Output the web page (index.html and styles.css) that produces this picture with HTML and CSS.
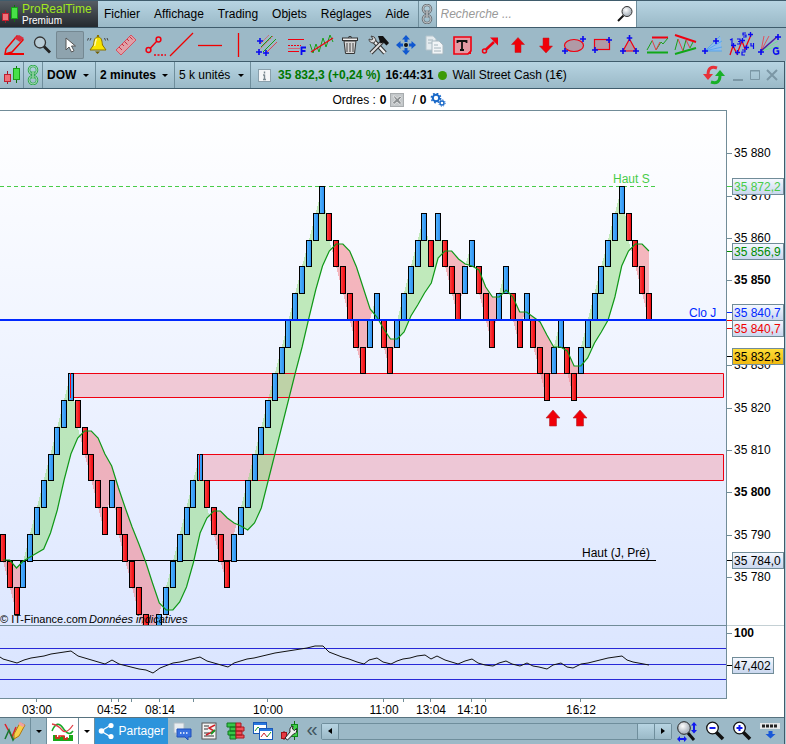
FILE: index.html
```html
<!DOCTYPE html>
<html lang="fr">
<head>
  <meta charset="UTF-8">
  <meta name="viewport" content="width=device-width, initial-scale=1.0">
  <title>ProRealTime Premium - DOW</title>
  <link rel="stylesheet" href="styles.css">
</head>
<body>
  <!-- Shared shapes -->
  <svg class="defs" width="0" height="0" aria-hidden="true">
    <defs>
      <symbol id="plus" viewBox="0 0 6 6"><path d="M3 0v6M0 3h6" stroke="#0a0af0" stroke-width="1.6"/></symbol>
      <symbol id="candles" viewBox="0 0 20 20">
        <path d="M5.500 6v13" stroke="#a01828"/><rect x="2.500" y="9.500" width="6" height="7" fill="#f07078" stroke="#c02030"/>
        <path d="M14.500 1v17" stroke="#107010"/><rect x="11.500" y="3.500" width="6" height="11" fill="#48e048" stroke="#18a018"/>
      </symbol>
      <symbol id="chain" viewBox="0 0 12 20">
        <rect x="2" y="1" width="8" height="8" rx="4" fill="none" stroke="currentColor" stroke-width="2.600"/>
        <rect x="2" y="11" width="8" height="8" rx="4" fill="none" stroke="currentColor" stroke-width="2.600"/>
        <rect x="2" y="1" width="8" height="8" rx="4" fill="none" stroke="#fff" stroke-opacity=".6" stroke-width=".9"/>
        <rect x="2" y="11" width="8" height="8" rx="4" fill="none" stroke="#fff" stroke-opacity=".6" stroke-width=".9"/>
        <path d="M6 6v8" stroke="currentColor" stroke-width="3"/><path d="M6 6v8" stroke="#fff" stroke-opacity=".8"/>
      </symbol>
      <linearGradient id="up" x1="0" x2="1"><stop offset="0" stop-color="#55b8ff"/><stop offset="1" stop-color="#2a8cf0"/></linearGradient>
      <linearGradient id="down" x1="0" x2="1"><stop offset="0" stop-color="#ff4a4a"/><stop offset="1" stop-color="#ee0008"/></linearGradient>
      <linearGradient id="tag" x1="0" x2="0" y1="0" y2="1"><stop offset="0" stop-color="#f6f9ff"/><stop offset="1" stop-color="#c8d6ee"/></linearGradient>
      <linearGradient id="gold" x1="0" x2="0" y1="0" y2="1"><stop offset="0" stop-color="#ffdf38"/><stop offset="1" stop-color="#f0b810"/></linearGradient>
      <radialGradient id="glass" cx=".4" cy=".35"><stop offset="0" stop-color="#fff"/><stop offset="1" stop-color="#b4bcc4"/></radialGradient>
    </defs>
  </svg>

  <!-- Menu bar -->
  <header class="menubar">
    <div class="logo">
      <svg width="20" height="20"><use href="#candles"/></svg>
      <div class="logo-text">
        <span class="logo-name">ProRealTime</span>
        <span class="logo-plan">Premium</span>
      </div>
    </div>
    <nav class="menu">
      <a href="#">Fichier</a>
      <a href="#">Affichage</a>
      <a href="#">Trading</a>
      <a href="#">Objets</a>
      <a href="#">Réglages</a>
      <a href="#">Aide</a>
    </nav>
    <button class="link-btn" aria-label="Lier"><svg width="12" height="20"><use href="#chain"/></svg></button>
    <div class="search">
      <input type="text" placeholder="Recherche ..." aria-label="Recherche">
      <svg width="18" height="18" viewBox="0 0 18 18"><circle cx="11" cy="6.500" r="5" fill="url(#glass)" stroke="#333"/><path d="M7.500 10.500L2 16" stroke="#111" stroke-width="2"/></svg>
    </div>
  </header>

  <!-- Drawing tools -->
  <div class="toolbar">
    <button aria-label="Dessin"><svg viewBox="0 0 28 28"><path d="M6 18L17 5l6 4-11 12-7 2z" fill="none" stroke="#f00000" stroke-width="1.500"/><path d="M19 4l5 3-4 4-6-4z" fill="#d83040"/><path d="M5 23h19" stroke="#f00000" stroke-width="2"/></svg></button>
    <button aria-label="Zoom"><svg viewBox="0 0 28 28"><circle cx="12" cy="11.500" r="5.500" fill="#b8ccd6" stroke="#333" stroke-width="1.300"/><path d="M16 15.500l6 6" stroke="#222" stroke-width="2.800"/></svg></button>
    <button class="active" aria-label="Sélection"><svg viewBox="0 0 28 28"><path d="M10 7v12l3-3 2.500 5 2.500-1.200-2.500-4.800h4z" fill="#fff" stroke="#555"/></svg></button>
    <button aria-label="Alerte"><svg viewBox="0 0 28 28"><path d="M14 6c-4 0-4 5-4.500 8L6 19h16l-3.500-5C18 11 18 6 14 6z" fill="#f8e400" stroke="#8a7200"/><path d="M11 20.500h5l-2.500 2.500z" fill="#705c00"/><path d="M12.500 8c-1.500 2-1 5-2 7" stroke="#fffbb0" stroke-width="1.500" fill="none"/><path d="M13 5h2" stroke="#8a7200" stroke-width="2"/><path d="M7 7l-1 2.500M4.500 7l-1 2.500M20.500 7l1 2.500M23 7l1 2.500" stroke="#444"/></svg></button>
    <button aria-label="Règle"><svg viewBox="0 0 28 28"><path d="M4 19L19 4l5 5L9 24z" fill="#e0a0a8" stroke="#d85060"/><path d="M7 16l3 3M10 13l2 2M12.500 10.500l3 3M15 8l2 2M17.500 5.500l3 3" stroke="#c83040"/></svg></button>
    <button aria-label="Segment"><svg viewBox="0 0 28 28" fill="none" stroke="#f00010" stroke-width="1.500"><circle cx="8.500" cy="19" r="2.400"/><circle cx="18.500" cy="8.500" r="2.400"/><path d="M10 17.500l7-7.500"/><path d="M14 24h12" stroke-dasharray="2 1.500"/></svg></button>
    <button aria-label="Droite"><svg viewBox="0 0 28 28"><path d="M2 25L25 2" stroke="#f00000" stroke-width="1.300"/></svg></button>
    <button aria-label="Horizontale"><svg viewBox="0 0 28 28"><path d="M2 14.500h24" stroke="#f00000" stroke-width="1.300"/></svg></button>
    <button aria-label="Verticale"><svg viewBox="0 0 28 28"><path d="M14.500 2v24" stroke="#f00000" stroke-width="1.300"/></svg></button>
    <button aria-label="Canal"><svg viewBox="0 0 28 28"><path d="M7 19L21 5M9 12L17 4" stroke="#e05060" stroke-dasharray="2 1"/><path d="M9 16L20 5M11 21l13-13" stroke="#18a018"/><path d="M14 22L25 11" stroke="#e04050"/><use href="#plus" x="5" y="7" width="6" height="6"/><use href="#plus" x="4" y="18" width="6" height="6"/><use href="#plus" x="11" y="19" width="6" height="6"/></svg></button>
    <button aria-label="Fibonacci"><svg viewBox="0 0 28 28"><path d="M8 8.500h16M8 20.500h11" stroke="#f00010"/><path d="M8 14.500h13" stroke="#f00010" stroke-dasharray="2 1"/><path d="M8 17.500h12" stroke="#e05060" stroke-width=".8"/><path d="M21.500 24v-7.500h4.500M21.500 20h4" fill="none" stroke="#0a0af0" stroke-width="1.800"/></svg></button>
    <button aria-label="Régression"><svg viewBox="0 0 28 28" fill="none"><path d="M2 13l3 9 3-9 3 8 4-14 3 9 4-12 3 7" stroke="#18a018"/><path d="M3 21L25 7" stroke="#f00010" stroke-width="1.300"/></svg></button>
    <button aria-label="Supprimer"><svg viewBox="0 0 28 28"><path d="M8 10h12l-1.500 12.500h-9z" fill="#d8d8d8" stroke="#333"/><path d="M11 12v9M14 12v9M17 12v9" stroke="#444"/><rect x="6.500" y="7" width="15" height="2.500" fill="#eee" stroke="#333"/><path d="M12 6.500q2-2.500 4 0" fill="none" stroke="#333"/></svg></button>
    <button aria-label="Outils"><svg viewBox="0 0 28 28"><path d="M8 8l13 14" stroke="#333" stroke-width="4.500"/><path d="M8 8l13 14" stroke="#eee" stroke-width="2.500"/><path d="M5 8q0 4 5 4l2-3q-1-4-5-4l2 3-2 1z" fill="#ddd" stroke="#444"/><path d="M7 22L19 10" stroke="#333" stroke-width="4"/><path d="M7 22L19 10" stroke="#ddd" stroke-width="2"/><path d="M14 5l5 0 6 7-2.500 2.500-3-3-3 1z" fill="#111"/></svg></button>
    <button aria-label="Déplacer"><svg viewBox="0 0 28 28"><path d="M14 4l4 4.500h-2.500V11h-3V8.500H10zM14 24l4-4.500h-2.500V17h-3v2.500H10zM4 14l4.500-4v2.500H11v3H8.500V18zM24 14l-4.500-4v2.500H17v3h2.500V18z" fill="#1058d0"/><circle cx="14" cy="14" r="2" fill="#111"/></svg></button>
    <button aria-label="Copier"><svg viewBox="0 0 28 28"><path d="M6 5h7l3 3v11H6z" fill="#e4ebef" stroke="#b4c4cc"/><path d="M8 9h5M8 12h5" stroke="#a4b4bc"/><path d="M12 10h7l4 4v9H12z" fill="#f2f5f7" stroke="#a8b8c0"/><path d="M14 14h4M14 17h7M14 20h7" stroke="#a4b4bc"/></svg></button>
    <button aria-label="Texte"><svg viewBox="0 0 28 28"><path d="M6 6h17v14l-3 3H6z" fill="#e49aa4" stroke="#f00010" stroke-width="1.600"/><path d="M9.500 12V10h9v2M14 10v9M12 19h4" fill="none" stroke="#111" stroke-width="1.800"/><path d="M23 19l-4 4h4z" fill="#f00010"/></svg></button>
    <button aria-label="Flèche"><svg viewBox="0 0 28 28"><circle cx="8.500" cy="20" r="2" fill="none" stroke="#f00010" stroke-width="1.500"/><path d="M10 18.500L18 11" stroke="#f00010" stroke-width="2.500"/><path d="M14 6.500h8v8z" fill="#f00010"/></svg></button>
    <button aria-label="Flèche haut"><svg viewBox="0 0 28 28"><path d="M14 6.500l6.500 7h-3.500v8h-6v-8H7.500z" fill="#f00008" stroke="#c01820" stroke-width=".5"/></svg></button>
    <button aria-label="Flèche bas"><svg viewBox="0 0 28 28"><path d="M14 22l6.500-7h-3.500V7h-6v8H7.500z" fill="#f00008" stroke="#c01820" stroke-width=".5"/></svg></button>
    <button aria-label="Ellipse"><svg viewBox="0 0 28 28"><ellipse cx="14" cy="14.500" rx="9.500" ry="6" fill="#b09aa6" stroke="#f00010" stroke-width="1.200"/><use href="#plus" x="20" y="5" width="6" height="6"/><use href="#plus" x="2" y="17" width="6" height="6"/></svg></button>
    <button aria-label="Rectangle"><svg viewBox="0 0 28 28"><rect x="6.500" y="8.500" width="15" height="10" fill="#b09aa6" stroke="#f00010" stroke-width="1.200"/><use href="#plus" x="18" y="6" width="6" height="6"/><use href="#plus" x="4" y="16" width="6" height="6"/></svg></button>
    <button aria-label="Triangle"><svg viewBox="0 0 28 28"><path d="M13.500 8l6.500 12H7z" fill="#b09aa6" stroke="#f00010" stroke-width="1.200"/><use href="#plus" x="10.500" y="4" width="6" height="6"/><use href="#plus" x="4" y="17" width="6" height="6"/><use href="#plus" x="17" y="17" width="6" height="6"/></svg></button>
    <button aria-label="Range"><svg viewBox="0 0 28 28" fill="none"><path d="M8 6.500h16" stroke="#f00010" stroke-width="2"/><path d="M3 21.500h21" stroke="#10a818" stroke-width="2"/><path d="M3 19l5-9M12 19l5-8 2 2 5-6" stroke="#18a018"/><path d="M8 9l4 10 4-8" stroke="#e04048"/></svg></button>
    <button aria-label="Biseau"><svg viewBox="0 0 28 28" fill="none"><path d="M3 4l21 7" stroke="#f00010" stroke-width="2"/><path d="M3 23l21-6" stroke="#10a818" stroke-width="2"/><path d="M3 19l3-11M11 20l3-11M18 17l3-6" stroke="#18a018"/><path d="M6 8l5 12M14 9l4 8" stroke="#e04048"/></svg></button>
    <button aria-label="Éventail"><svg viewBox="0 0 28 28"><path d="M5 20L21 6v14z" fill="#8cbcec"/><path d="M5 20L22 10M5 20l17-4M5 20h17M5 20L20 5" stroke="#4aa0f0" stroke-width=".8"/><use href="#plus" x="2" y="17" width="6" height="6"/><use href="#plus" x="13" y="7" width="6" height="6"/></svg></button>
    <button aria-label="Elliott"><svg viewBox="0 0 28 28" fill="none"><path d="M2 24l3-9 4 8 5-13 3 8 6-14" stroke="#f00010" stroke-width="1.300"/><path d="M2 9l2-1v6M9 8h3v5H9M10 10.500h2M18 2h-3v2h3v2h-3M14 19h3v2h-3v3h3M23 12v3h3M25.500 12v6" stroke="#0a0af0" stroke-width="1.200"/><use href="#plus" x="3" y="12" width="5" height="5"/><use href="#plus" x="7" y="19" width="5" height="5"/><use href="#plus" x="12" y="7" width="5" height="5"/><use href="#plus" x="16" y="14" width="5" height="5"/><use href="#plus" x="20" y="1" width="5" height="5"/></svg></button>
    <button aria-label="Gann"><svg viewBox="0 0 28 28" fill="none"><path d="M5 20L8 5M5 20L13 5" stroke="#e05060"/><path d="M5 20L22 10M5 20l18-5" stroke="#70e090"/><path d="M5 20L22 5" stroke="#5020a0" stroke-width="1.500"/><path d="M22.500 17.500q-5-2-5 2.500t5 2.500v-2.500h-2" stroke="#0a0af0" stroke-width="1.600"/><use href="#plus" x="2" y="18" width="6" height="6"/><use href="#plus" x="19" y="3" width="6" height="6"/></svg></button>
  </div>

  <div class="window">
    <!-- Chart title bar -->
    <div class="titlebar">
      <span class="cell type"><svg width="20" height="20"><use href="#candles"/></svg></span>
      <button class="cell green" aria-label="Lier la fenêtre"><svg width="12" height="20"><use href="#chain"/></svg></button>
      <div class="cell select bold symbol"><select aria-label="Valeur"><option>DOW</option></select></div>
      <div class="cell select bold timeframe"><select aria-label="Unité de temps"><option>2 minutes</option></select></div>
      <div class="cell select units"><select aria-label="Historique"><option>5 k unités</option></select></div>
      <button class="info" aria-label="Informations"><svg width="13" height="13" viewBox="0 0 13 13"><rect x=".5" y=".5" width="12" height="12" fill="#f4f6f8" stroke="#8aa0ac"/><path d="M6.500 2.500v2M6.500 5.500v5M5 6h1.500M5 10.500h3" stroke="#7a8890" stroke-width="1.400"/></svg></button>
      <span class="quote">35 832,3 (+0,24 %)</span>
      <time class="clock">16:44:31</time>
      <span class="dot"></span>
      <span class="market">Wall Street Cash (1€)</span>
      <div class="win-buttons">
        <button aria-label="Actualiser"><svg width="22" height="20" viewBox="0 0 22 20"><path d="M14 3Q5 0 5 10" fill="none" stroke="#e83038" stroke-width="3"/><path d="M0 9h10l-5 6z" fill="#e83038"/><path d="M8 17q9 3 9-7" fill="none" stroke="#18b028" stroke-width="3"/><path d="M12 11h10l-5-6z" fill="#18b028"/></svg></button>
        <button aria-label="Réduire"><svg width="12" height="14"><path d="M1 12h10" stroke="#7b97a5" stroke-width="2"/></svg></button>
        <button aria-label="Agrandir"><svg width="12" height="14"><path d="M1.500 2.500h9v9h-9zM1 3h10" fill="none" stroke="#7b97a5"/></svg></button>
        <button aria-label="Fermer"><svg width="12" height="14"><path d="M1 2l10 10M11 2L1 12" stroke="#7b97a5" stroke-width="2"/></svg></button>
      </div>
    </div>

    <!-- Orders -->
    <div class="orders">
      <span>Ordres :</span> <b>0</b>
      <svg width="14" height="14" viewBox="0 0 14 14"><rect x=".5" y=".5" width="13" height="13" fill="#c4c8ca" stroke="#a8acae"/><path d="M3 3l2 0 2 2.500 3-2.500 1.500 1.500-2.500 2.500 2.500 3-1.500 1.500-3-2.500-3 2.500-1.500-2 3-2.500z" fill="#8c9092" stroke="#f0f0f0" stroke-width=".7"/></svg>
      <span class="slash">/</span> <b>0</b>
      <svg width="16" height="14" viewBox="0 0 16 14" fill="none" stroke="#1868c8"><circle cx="6" cy="5" r="3.200" stroke-width="2"/><circle cx="6" cy="5" r="4.700" stroke-width="1.400" stroke-dasharray="1.800 1.890"/><circle cx="12" cy="10" r="2" stroke-width="1.400"/><circle cx="12" cy="10" r="3.200" stroke-dasharray="1.200 1.310"/></svg>
    </div>

    <!-- Chart -->
    <main class="chart">
      <div class="plots">
        <svg class="price" id="price"></svg>
        <svg class="indicator" id="indicator"></svg>
      </div>
      <svg class="axis" id="axis"></svg>
      <svg class="times" id="times"></svg>
    </main>

    <!-- Bottom bar -->
    <footer class="bottombar">
      <button class="tool-first" aria-label="Dessiner"><svg width="22" height="22" viewBox="0 0 22 22" fill="none"><path d="M1 4l7 13 4-10" stroke="#e02028" stroke-width="1.500"/><path d="M1 19l4-9 4 10 9-15" stroke="#187830" stroke-width="1.500"/><path d="M10 14l6-11 5 2-6 11-5 3z" fill="#f8d048" stroke="#b07810"/><path d="M15 3l5 3" stroke="#f0a0a0" stroke-width="3"/></svg></button>
      <button class="drop" aria-label="Plus d'outils"></button>
      <button class="tool-ind" aria-label="Indicateurs"><svg width="24" height="22" viewBox="0 0 24 22" fill="none"><path d="M1 11q5-12 11-3t10 3" stroke="#18a828" stroke-width="1.500"/><path d="M1 4q6 1 10 6t11-5" stroke="#e04048" stroke-width="1.300"/><path d="M2 15h4v2h4v-1h4v2h4v-3h4v6H2z" fill="#18a818"/><path d="M5 15v3h3v-2h5v3h3v-2" stroke="#e82020" stroke-width="1.500"/></svg></button>
      <button class="drop white" aria-label="Plus d'indicateurs"></button>
      <button class="share"><svg width="16" height="18" viewBox="0 0 16 18"><path d="M13 3L3 9l10 6" fill="none" stroke="#fff" stroke-width="1.300"/><circle cx="13" cy="3.500" r="2.600" fill="#fff"/><circle cx="3.500" cy="9" r="2.800" fill="#fff"/><circle cx="13" cy="14.500" r="2.600" fill="#fff"/></svg>Partager</button>
      <button class="tool" aria-label="Discussion"><svg width="20" height="20" viewBox="0 0 20 20"><path d="M2 2h10v10H8l-4 3v-3H2z" fill="#e8edf0" stroke="#b0bcc4"/><path d="M5 8h14v8h-3v3l-3-3H5z" fill="#3870e0" stroke="#2050b8"/><path d="M8 12h1.500M11 12h1.500M14 12h1.500" stroke="#fff" stroke-width="1.500"/></svg></button>
      <button class="tool" aria-label="Carnet"><svg width="20" height="20" viewBox="0 0 20 20"><rect x="3" y="2" width="14" height="16" fill="#f4f4f4" stroke="#555"/><path d="M5 5h5M5 8h4M5 12h5M5 15h10" stroke="#333"/><path d="M16 4l-6 3 5 3-8 4" fill="none" stroke="#d02028" stroke-width="1.500"/><path d="M12 13l4-4" stroke="#189828" stroke-width="2"/></svg></button>
      <button class="tool" aria-label="Profondeur"><svg width="20" height="20" viewBox="0 0 20 20"><path d="M1 2h9v4H1zM4 6h6v4H4zM2 10h8v4H2zM4 14h6v4H4z" fill="#38c848" stroke="#107820"/><path d="M10 2h5v4h-5zM10 6h8v4h-8zM10 10h6v4h-6zM10 14h8v3h-8z" fill="#f05058" stroke="#a81820"/></svg></button>
      <button class="tool" aria-label="Fenêtres"><svg width="20" height="20" viewBox="0 0 20 20"><rect x=".5" y="1.500" width="13" height="11" fill="#fff" stroke="#1858b8"/><path d="M1 3h12" stroke="#2878e0" stroke-width="2"/><path d="M2 10l3-4 3 3" fill="none" stroke="#189828"/><rect x="6.500" y="7.500" width="13" height="11" fill="#fff" stroke="#1858b8"/><path d="M7 9h12" stroke="#2878e0" stroke-width="2"/><path d="M8 16l3-4 3 4" fill="none" stroke="#d02028"/><path d="M14 16l4-5" stroke="#189828"/></svg></button>
      <button class="tool" aria-label="Réglages"><svg width="20" height="20" viewBox="0 0 20 20"><path d="M14.500 0v19" stroke="#107010"/><rect x="11.500" y="3.500" width="6" height="12" fill="#40d048" stroke="#108818"/><path d="M4 10v9" stroke="#801010"/><rect x="1.500" y="11.500" width="5" height="6" fill="#e83840" stroke="#a01018"/><path d="M5 17l5-6q-1-5 3-6l-.5 3 2 1.500 2-2q1 5-3 5.500l-6 6z" fill="#f0f0f0" stroke="#222"/></svg></button>
      <button class="collapse" aria-label="Replier">«</button>
      <div class="scroll">
        <button class="arrow left" aria-label="Gauche"></button>
        <div class="track"><span class="thumb"></span></div>
        <button class="arrow right" aria-label="Droite"></button>
      </div>
      <div class="zooms">
        <button aria-label="Ajuster"><svg width="22" height="22" viewBox="0 0 22 22"><path d="M12 13l6 7" stroke="#111" stroke-width="3"/><circle cx="8" cy="8" r="6.300" fill="url(#glass)" stroke="#222"/><path d="M18 2l3 3.500h-2V10h2l-3 3.500L15 10h2V5.500h-2zM1 19l3-3v2h4v-2l3 3-3 3v-2H4v2z" fill="#1018f0"/></svg></button>
        <button aria-label="Zoom arrière"><svg width="22" height="22" viewBox="0 0 22 22"><path d="M12 12l7 7" stroke="#111" stroke-width="3.500"/><circle cx="8.500" cy="8" r="5.800" fill="#fff" stroke="#111" stroke-width="1.300"/><path d="M5.500 8h6" stroke="#1018f0" stroke-width="2"/></svg></button>
        <button aria-label="Zoom avant"><svg width="22" height="22" viewBox="0 0 22 22"><path d="M12 12l7 7" stroke="#111" stroke-width="3.500"/><circle cx="8.500" cy="8" r="5.800" fill="#fff" stroke="#111" stroke-width="1.300"/><path d="M5.500 8h6M8.500 5v6" stroke="#1018f0" stroke-width="2"/></svg></button>
        <button aria-label="Clavier"><svg width="22" height="22" viewBox="0 0 22 22"><rect x="1" y="3" width="20" height="6" fill="#e4e8ea"/><path d="M3 6h16" stroke="#222" stroke-width="3" stroke-dasharray="3 1"/><path d="M9.500 11h4v3h3l-5 4.500-5-4.500h3z" fill="#1858d8"/></svg></button>
      </div>
    </footer>
  </div>

  <script src="script.js"></script>
</body>
</html>
```
FILE: styles.css
```css
/* General */
* {
  box-sizing: border-box;
}

body {
  margin: 0;
  background: #b4ced9;
  font-family: "Liberation Sans", Arial, sans-serif;
  font-size: 12px;
  color: #000;
  overflow: hidden;
}

button {
  display: flex;
  align-items: center;
  justify-content: center;
  padding: 0;
  border: 0;
  background: none;
  color: inherit;
  font: inherit;
}

svg {
  display: block;
}

.defs {
  position: absolute;
}

/* Menu bar */
.menubar {
  display: flex;
  height: 28px;
  border-top: 1px solid #3f5c6c;
  border-bottom: 1px solid #3f5c6c;
  background: linear-gradient(#b7d4e2, #9ab9c7);
}

.logo {
  display: flex;
  align-items: center;
  gap: 2px;
  width: 98px;
  background: linear-gradient(#565d64, #24292e);
}

.logo-text {
  display: flex;
  flex-direction: column;
}

.logo-name {
  color: #a0e820;
  line-height: 13px;
}

.logo-plan {
  color: #fff;
  font-size: 10px;
  line-height: 10px;
}

.menu {
  display: flex;
  align-items: center;
  gap: 14px;
  padding: 0 8px 0 6px;
}

.menu a {
  color: #000;
  text-decoration: none;
}

.link-btn {
  width: 19px;
  border-left: 1px solid #6f8e9c;
  border-right: 1px solid #6f8e9c;
  color: #6c747a;
}

.search {
  display: flex;
  align-items: center;
  width: 200px;
  padding: 0 2px 0 4px;
  background: #fff;
  border-right: 1px solid #6f8e9c;
}

.search input {
  flex: 1;
  min-width: 0;
  padding: 0;
  border: 0;
  outline: 0;
  font: inherit;
}

.search input::placeholder {
  color: #999;
  font-style: italic;
}

/* Drawing tools */
.toolbar {
  display: flex;
  align-items: center;
  height: 33px;
  background: #9cb9c7;
}

.toolbar button {
  width: 28px;
  height: 28px;
  border-radius: 2px;
}

.toolbar svg {
  width: 28px;
  height: 28px;
}

.toolbar .active {
  background: #8ea3ae;
  box-shadow: inset 0 0 0 1px #748892;
}

/* Chart window */
.window {
  margin-right: 1px;
  border-top: 1px solid #3f5c6c;
  border-right: 1px solid #3f5c6c;
  background: #fff;
}

.titlebar {
  display: flex;
  align-items: center;
  height: 27px;
  border-bottom: 1px solid #3f5c6c;
  background: linear-gradient(#b7d4e2, #9ab9c7);
}

.cell {
  display: flex;
  align-items: center;
  justify-content: center;
  align-self: stretch;
  border-right: 1px solid #6f8e9c;
}

.type {
  width: 24px;
}

.green {
  width: 19px;
  color: #30a850;
}

.select {
  position: relative;
}

.symbol {
  width: 53px;
}

.timeframe {
  width: 79px;
}

.units {
  width: 76px;
  margin-right: 7px;
}

.select select {
  appearance: none;
  width: 100%;
  height: 100%;
  padding: 0 0 0 4px;
  border: 0;
  background: none;
  font: inherit;
  color: inherit;
}

.bold,
.bold select {
  font-weight: bold;
}

/* small down arrow of the drop-downs */
.select::after,
.drop::after {
  content: '';
  border: 3px solid transparent;
  border-top-color: #000;
  border-bottom: 0;
}

.select::after {
  position: absolute;
  right: 6px;
  top: 12px;
  pointer-events: none;
}

.quote {
  margin-left: 7px;
  color: #007800;
  font-weight: bold;
}

.clock {
  margin-left: 5px;
  font-weight: bold;
}

.dot {
  width: 9px;
  height: 9px;
  margin: 0 5px;
  border-radius: 50%;
  background: #3c9a08;
}

.win-buttons {
  display: flex;
  align-items: center;
  gap: 5px;
  margin-left: auto;
  padding-right: 6px;
}

.win-buttons button:first-child {
  margin-right: 2px;
}

.orders {
  display: flex;
  align-items: center;
  justify-content: center;
  gap: 4px;
  height: 21px;
  padding-right: 6px;
}

.orders .slash {
  margin-left: 5px;
}

.orders b + svg {
  margin-left: -1px;
}

/* Chart */
.chart {
  display: grid;
  grid-template-columns: 1fr 57px;
}

.plots {
  min-width: 0;
  border: 1px solid #718c98;
  border-left: 0;
  background: linear-gradient(#ffffff, #d9e4ff);
}

.price {
  width: 100%;
  height: 515px;
  border-bottom: 1px solid #718c98;
}

.indicator {
  width: 100%;
  height: 72px;
}

.axis {
  width: 57px;
  height: 589px;
}

.times {
  grid-column: 1 / 3;
  width: 100%;
  height: 18px;
}

/* Bottom bar */
.bottombar {
  display: flex;
  align-items: stretch;
  height: 27px;
  border-top: 1px solid #57727f;
  background: #9cb9c7;
}

.tool-first {
  width: 31px;
  border-right: 1px solid #6f8e9c;
}

.drop {
  width: 16px;
  border-right: 1px solid #6f8e9c;
}

.tool-ind {
  width: 32px;
  border-right: 1px solid #6f8e9c;
  background: #fff;
}

.white {
  background: #fff;
}

.share {
  gap: 4px;
  width: 73px;
  background: #2c94dc;
  color: #fff;
}

.tool {
  width: 27px;
}

.collapse {
  width: 18px;
  padding-bottom: 4px;
  color: #3f5560;
  font-size: 20px;
}

.scroll {
  display: flex;
  flex: 1;
  align-self: center;
  height: 17px;
  border: 1px solid #6f8e9c;
  border-radius: 2px;
}

.arrow {
  width: 16px;
  background: linear-gradient(#b7d4e2, #9ab9c7);
}

.arrow::after {
  content: '';
  border: 3px solid transparent;
}

.left::after {
  border-right: 4px solid #000;
  border-left: 0;
}

.right::after {
  border-left: 4px solid #000;
  border-right: 0;
}

.track {
  display: flex;
  flex: 1;
  justify-content: flex-end;
  border-left: 1px solid #6f8e9c;
  border-right: 1px solid #6f8e9c;
}

.thumb {
  width: 17px;
  border-left: 1px solid #6f8e9c;
  background: linear-gradient(#b7d4e2, #9ab9c7);
}

.zooms {
  display: flex;
  width: 112px;
  padding-left: 1px;
}

.zooms button {
  flex: 1;
}

/* Chart texts */
.chart text {
  font-size: 12px;
}

.chart .strong {
  font-weight: bold;
}

.chart .note {
  font-size: 11px;
}

.chart .italic {
  font-style: italic;
}

.crisp {
  shape-rendering: crispEdges;
}
```
FILE: script.js
```js
const price = document.getElementById('price');
const indicator = document.getElementById('indicator');
const axis = document.getElementById('axis');
const times = document.getElementById('times');

// One letter per brick: U = up, D = down
const bricks = 'DDDUUUUUUUUDDDDDUDDDDDDUUUUUUUDDDDUUUUUUUUUUUUUUDDDDDDUUDDUUUUUDUDDDUUDDDUUDDUDDDUUDDUUUUUUUDDDD';

// Moving average, one value per brick
const average = [
  449, 449, 457, 450, 446, 442, 438, 422, 399, 369, 343, 327, 320, 320, 327, 343, 355, 377, 397, 416,
  433, 451, 472, 492, 499, 499, 491, 476, 452, 422, 407, 400, 400, 407, 412, 415, 419, 412, 397, 370,
  343, 316, 289, 262, 236, 207, 179, 155, 140, 133, 133, 140, 156, 177, 198, 206, 218, 228, 228, 221,
  205, 194, 182, 172, 147, 140, 140, 148, 153, 155, 159, 176, 186, 186, 179, 186, 201, 201, 206, 211,
  224, 236, 236, 240, 255, 255, 247, 232, 221, 209, 186, 155, 140, 133, 133, 140
];

const rsi = [
  [0, 31], [3, 33], [17, 37], [24, 34], [31, 32], [44, 30], [51, 28], [71, 25], [78, 30], [105, 38],
  [112, 34], [119, 38], [139, 43], [146, 44], [153, 47], [160, 42], [173, 37], [180, 36], [200, 31],
  [207, 35], [228, 41], [234, 37], [247, 33], [254, 32], [275, 27], [307, 22], [315, 20], [323, 20],
  [329, 26], [342, 31], [349, 33], [357, 36], [364, 38], [369, 34], [377, 32], [383, 36], [391, 38],
  [397, 35], [403, 33], [410, 32], [417, 30], [425, 29], [431, 33], [437, 30], [445, 34], [458, 38],
  [465, 35], [472, 33], [478, 37], [485, 39], [493, 40], [499, 37], [506, 35], [512, 38], [520, 40],
  [527, 37], [533, 40], [539, 41], [547, 43], [553, 39], [561, 37], [567, 41], [573, 42], [581, 38],
  [588, 37], [608, 32], [622, 30], [627, 34], [633, 36], [649, 39]
];

const brickX = i => 2.9 + 6.8 * i;
const levelY = k => Math.round(75 + 26.75 * k);

// Rows of the bricks, level 0 being the highest one
let level = 13;
const rows = [];
for (let i = 0; i < bricks.length; i++) {
  if (i > 0) {
    level += bricks[i] === 'U' ? -1 : 1;
  }
  rows.push(level);
}
const closes = rows.map((row, i) => levelY(bricks[i] === 'U' ? row : row + 1));

function area(points, up) {
  const color = up ? 'rgba(140,220,120,0.5)' : 'rgba(244,116,124,0.5)';
  return `<polygon points="${points.map(p => p.join()).join(' ')}" fill="${color}"/>`;
}

function drawAreas() {
  let html = '';
  for (let i = 0; i < closes.length - 1; i++) {
    const x1 = brickX(i);
    const x2 = brickX(i + 1);
    const d1 = average[i] - closes[i];
    const d2 = average[i + 1] - closes[i + 1];
    if (d1 * d2 < 0) {
      const t = d1 / (d1 - d2);
      const cross = [x1 + (x2 - x1) * t, closes[i] + (closes[i + 1] - closes[i]) * t];
      html += area([[x1, closes[i]], cross, [x1, average[i]]], d1 > 0);
      html += area([cross, [x2, closes[i + 1]], [x2, average[i + 1]]], d2 > 0);
    } else {
      html += area([[x1, closes[i]], [x2, closes[i + 1]], [x2, average[i + 1]], [x1, average[i]]], d1 + d2 > 0);
    }
  }
  return html;
}

function drawBricks() {
  return rows.map((row, i) => {
    const x = Math.round(brickX(i) - 3) + 0.5;
    const y = levelY(row) + 0.5;
    const height = levelY(row + 1) - levelY(row);
    return `<rect x="${x}" y="${y}" width="5" height="${height}" fill="url(#${bricks[i] === 'U' ? 'up' : 'down'})" stroke="#000"/>`;
  }).join('');
}

function arrow(x) {
  return `<path d="M${x} 299l7 8h-3.500v8h-7v-8h-3.500z" fill="#f00008" stroke="#b02830" stroke-width=".6"/>`;
}

price.innerHTML = `
  <rect x="70" y="262" width="653" height="24" fill="rgba(245,150,165,0.45)"/>
  <rect x="199" y="343" width="524" height="26" fill="rgba(245,150,165,0.45)"/>
  <g class="crisp">${drawAreas()}</g>
  <path d="M0 449.500H656" stroke="#000"/>
  <path d="M0 75.500H655" stroke="#48cc48" stroke-dasharray="4 3"/>
  <path d="M70 262.500H723.500V286.500H70M199 343.500H723.500V369.500H199" fill="none" stroke="#f00010"/>
  ${drawBricks()}
  <path d="M70.500 262V287M199.500 343V370" stroke="#f00010"/>
  <polyline points="${average.map((y, i) => brickX(i) + ',' + y).join(' ')}" fill="none" stroke="#109818" stroke-width="1.200"/>
  <path d="M0 209H2000" stroke="#0028ff" stroke-width="2"/>
  ${arrow(553)}${arrow(580)}
  <text x="613" y="72" fill="#48cc48">Haut S</text>
  <text x="689" y="206" fill="#0028ff">Clo J</text>
  <text x="582" y="446">Haut (J, Pré)</text>
  <text x="0" y="512" class="note">© IT-Finance.com</text>
  <text x="89" y="512" class="note italic">Données indicatives</text>`;

indicator.innerHTML = `
  <path d="M0 22.500H2000M0 38.500H2000M0 53.500H2000" stroke="#2828d8"/>
  <polyline points="${rsi.map(p => p.join()).join(' ')}" fill="none" stroke="#111"/>`;

// Price axis
const labels = [
  [43, '35 880'], [86, '35 870'], [128, '35 860'], [170, '35 850', 'strong'], [255, '35 830'],
  [298, '35 820'], [340, '35 810'], [382, '35 800', 'strong'], [425, '35 790'], [467, '35 780'],
  [523, '100', 'strong']
];
const tags = [
  [76, '35 872,2', '#48cc48'], [141, '35 856,9', '#008c00'], [202, '35 840,7', '#0028ff'],
  [218, '35 840,7', '#f00000'], [246, '35 832,3', '#000', 'gold'], [450, '35 784,0', '#000'],
  [555, '47,402', '#000']
];

axis.innerHTML = labels.map(([y, text, cls = '']) => `
  <path d="M0 ${y + 0.5}h5" stroke="#718c98"/>
  <text x="7" y="${y + 4}" class="${cls}">${text}</text>`).join('') +
  '<path d="M0 515.500h57" stroke="#c4d0d4"/><path d="M0 210.500h5" stroke="#f00000"/>' +
  tags.map(([y, text, color, fill = 'tag']) => `
  <path d="M0 ${y + 0.5}h5" stroke="${color}"/>
  <rect x="5.500" y="${y - 7.5}" width="${text.length > 6 ? 51 : 41}" height="16" fill="url(#${fill})" stroke="#718c98"/>
  <text x="7" y="${y + 5}" fill="${color}">${text}</text>`).join('');

// Time axis
const ticks = [36, 111, 118, 131, 159, 193, 267, 383, 403, 430, 471, 485, 580];
const hours = [
  [37, '03:00'], [112, '04:52'], [160, '08:14'], [268, '10:00'],
  [384, '11:00'], [431, '13:04'], [472, '14:10'], [581, '16:12']
];

times.innerHTML = ticks.map(x => `<path d="M${x + 0.5} 0v3" stroke="#718c98"/>`).join('') +
  hours.map(([x, text]) => `<text x="${x}" y="15" text-anchor="middle">${text}</text>`).join('');
```
